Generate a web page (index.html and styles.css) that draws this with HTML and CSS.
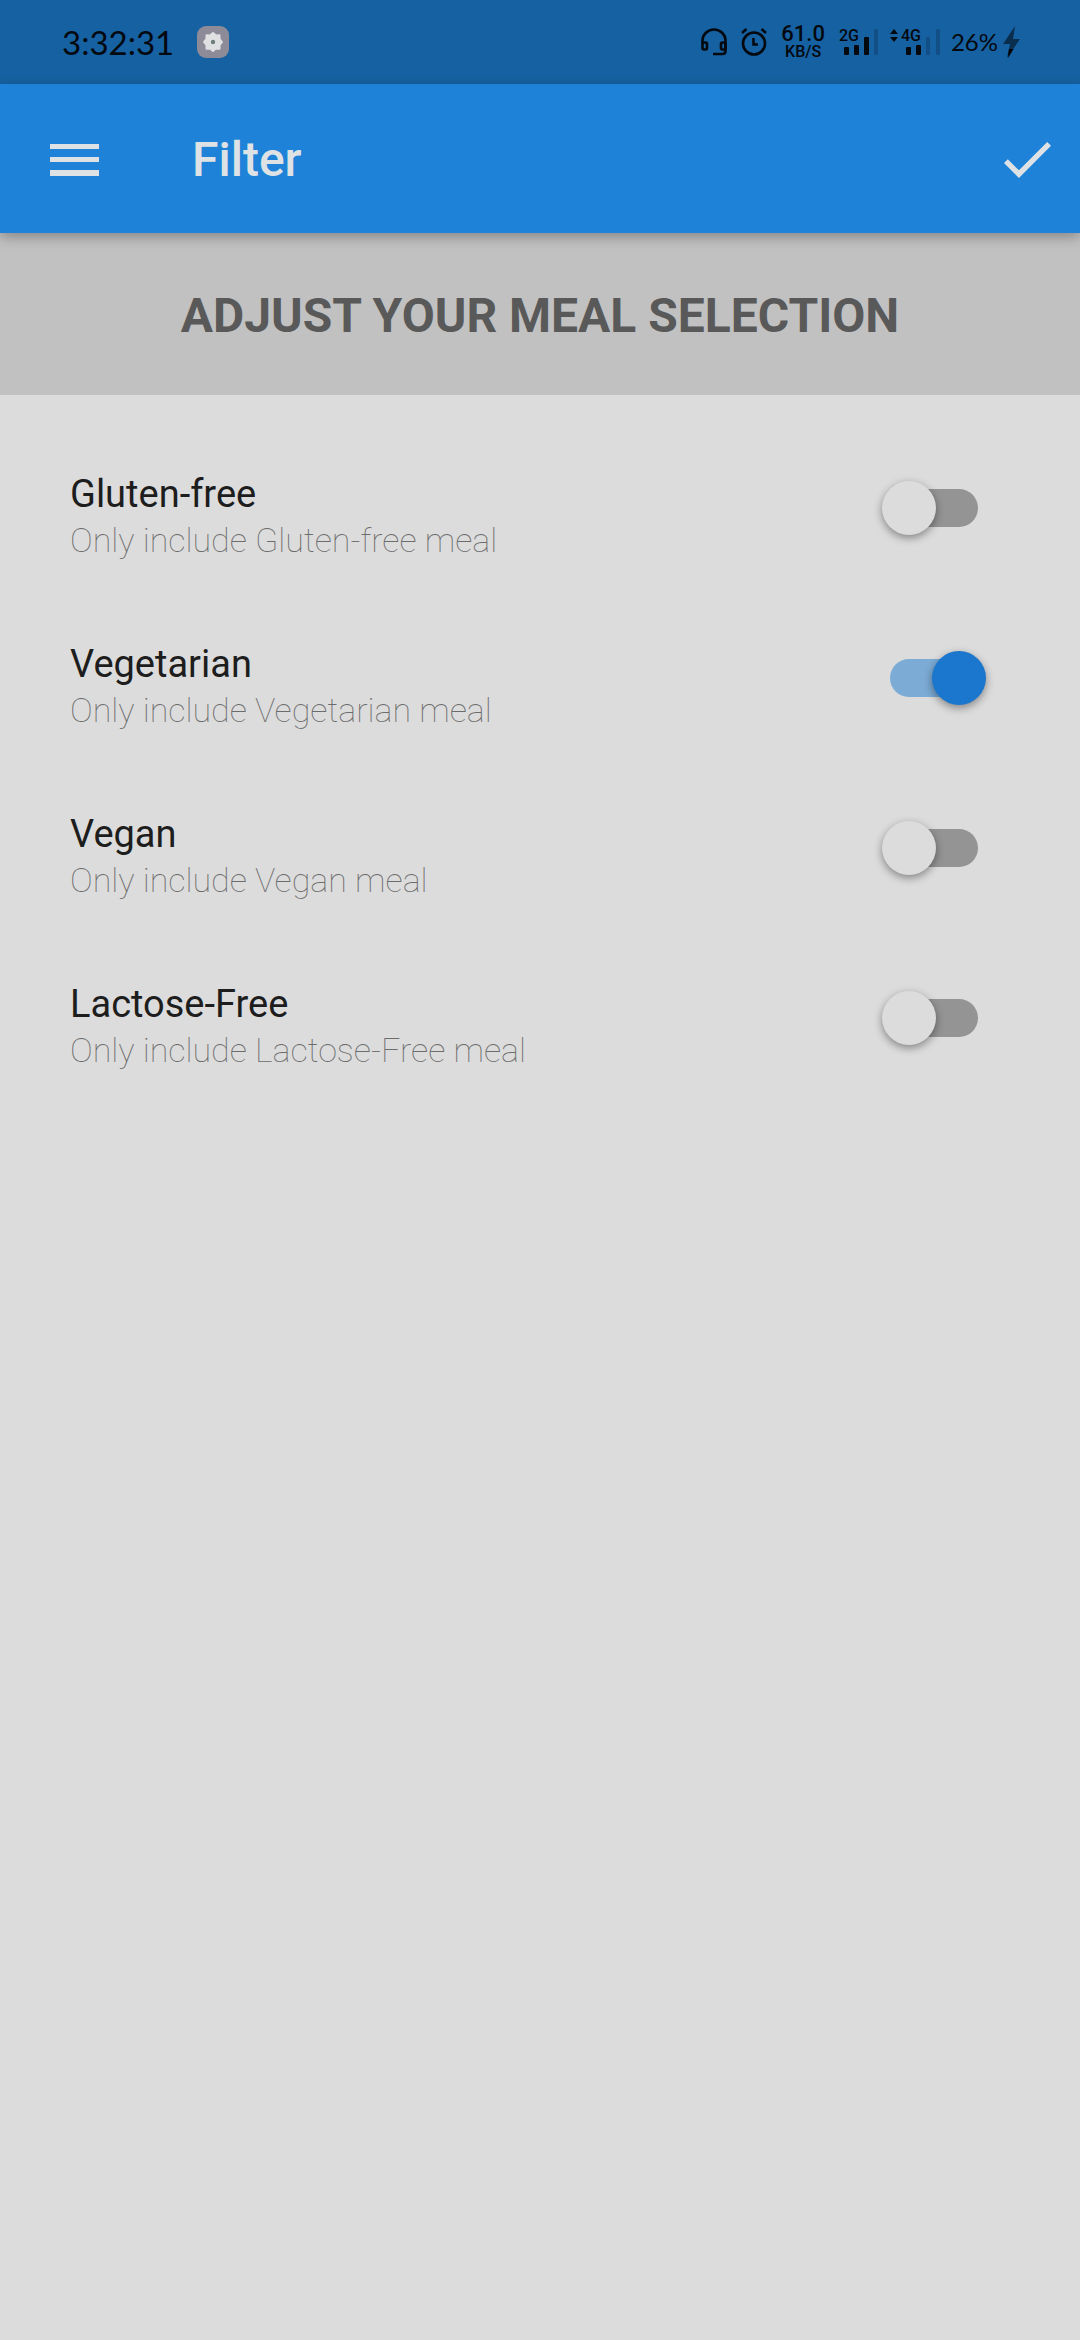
FILE: index.html
```html
<!DOCTYPE html>
<html lang="en">
<head>
  <meta charset="utf-8">
  <meta name="viewport" content="width=device-width, initial-scale=1">
  <title>Filter</title>
  <link rel="stylesheet" href="styles.css">
</head>
<body>
  <div class="status">
    <span class="status-time">3:32:31</span>
    <svg class="status-app" width="32" height="32" viewBox="0 0 32 32" aria-hidden="true">
      <rect width="32" height="32" rx="9" fill="#8d8b98"/>
      <path d="M16 7l2.800 2.600 3.700-.3.100 3.700L25 16l-2.400 3-.1 3.700-3.700-.3L16 25l-2.800-2.600-3.700.3-.1-3.700L7 16l2.400-3 .1-3.700 3.700.3z" fill="#dfe0e2" stroke="#dfe0e2" stroke-width="2" stroke-linejoin="round"/>
      <circle cx="16" cy="16" r="2.200" fill="#6f7f78"/>
    </svg>
    <div class="status-icons">
      <svg width="26" height="28" viewBox="0 0 26 28" fill="none" stroke="#04080f" stroke-width="2.600" aria-hidden="true">
        <path d="M1.500 15v-2.500a11.500 11 0 0 1 23 0V23q0 3-3 3H12"/>
        <rect x="1.500" y="14.500" width="4.500" height="7" rx="1.500"/>
        <rect x="20" y="14.500" width="4.500" height="7" rx="1.500"/>
      </svg>
      <svg width="26" height="28" viewBox="0 0 26 28" fill="none" stroke="#04080f" stroke-width="2.600" aria-hidden="true">
        <circle cx="13" cy="15.500" r="11"/>
        <path d="M12.500 10v6.500H17M1 5l4.500-4M25 5l-4.500-4"/>
      </svg>
      <div class="net"><span class="net-rate">61.0</span><span class="net-unit">KB/S</span></div>
      <div class="radios">
        <svg class="signal" width="40" height="34" viewBox="0 -3 40 34" aria-label="2G signal">
          <text x="0" y="13">2G</text>
          <rect x="5" y="19" width="5" height="8" rx="1"/>
          <rect x="15" y="17" width="5" height="10" rx="1"/>
          <rect x="25" y="9" width="5" height="18" rx="1"/>
          <rect class="faint" x="35" y="1" width="4" height="26" rx="1"/>
        </svg>
        <svg class="signal" width="50" height="34" viewBox="0 -3 50 34" aria-label="4G signal">
          <path d="M0 6l4-5 4 5zM0 9h8l-4 5z"/>
          <text x="11" y="13">4G</text>
          <rect x="16" y="19" width="5" height="8" rx="1"/>
          <rect x="26" y="17" width="5" height="10" rx="1"/>
          <rect class="faint" x="36" y="9" width="4" height="18" rx="1"/>
          <rect class="faint" x="46" y="1" width="4" height="26" rx="1"/>
        </svg>
        <div class="battery">
          <span>26%</span>
          <svg width="17" height="32" viewBox="0 0 17 32" aria-hidden="true">
            <path d="M12 0L0 18h7L4 32 17 13h-7z" fill="#0a2e4d"/>
            <path d="M6 23h4.500L5 32z" fill="#000"/>
          </svg>
        </div>
      </div>
    </div>
  </div>

  <header class="appbar">
    <button class="icon-button" type="button" aria-label="Open menu">
      <svg width="49" height="32" viewBox="0 0 49 32" fill="#dfe2e5"><path d="M0 0h49v5H0zM0 13h49v5H0zM0 26h49v6H0z"/></svg>
    </button>
    <h1 class="appbar-title">Filter</h1>
    <button class="icon-button" type="button" aria-label="Save filters">
      <svg width="47" height="36" viewBox="3.410 5.590 17.590 13.410" fill="#dfe2e5"><path d="M9 16.170 4.830 12l-1.420 1.410L9 19 21 7l-1.410-1.410z"/></svg>
    </button>
  </header>

  <main>
    <h2 class="banner">ADJUST YOUR MEAL SELECTION</h2>
    <div class="filters">
      <label class="filter">
        <span class="filter-text"><span class="filter-name">Gluten-free</span><span class="filter-note">Only include Gluten-free meal</span></span>
        <input class="switch" type="checkbox" role="switch">
      </label>
      <label class="filter">
        <span class="filter-text"><span class="filter-name">Vegetarian</span><span class="filter-note">Only include Vegetarian meal</span></span>
        <input class="switch" type="checkbox" role="switch" checked>
      </label>
      <label class="filter">
        <span class="filter-text"><span class="filter-name">Vegan</span><span class="filter-note">Only include Vegan meal</span></span>
        <input class="switch" type="checkbox" role="switch">
      </label>
      <label class="filter">
        <span class="filter-text"><span class="filter-name">Lactose-Free</span><span class="filter-note">Only include Lactose-Free meal</span></span>
        <input class="switch" type="checkbox" role="switch">
      </label>
    </div>
  </main>
</body>
</html>
```
FILE: styles.css
```css
* {
  box-sizing: border-box;
}

body {
  margin: 0;
  min-height: 100vh;
  background: #dcdcdc;
  color: #1d1d1d;
  font-family: Roboto, sans-serif;
}

svg {
  display: block;
  flex: none;
}

/* System status bar */
.status {
  display: flex;
  align-items: center;
  height: 84px;
  padding: 0 60px 0 62px;
  background: #1661a1;
  color: #04080f;
}

.status-time {
  font: 33px/40px Lato, sans-serif;
}

.status-app {
  margin-left: 23px;
}

.status-icons {
  display: flex;
  align-items: center;
  gap: 14px;
  margin-left: auto;
}

.net {
  display: flex;
  flex-direction: column;
  align-items: center;
  font-weight: 500;
}

.net-rate {
  font-size: 22px;
  line-height: 20px;
}

.net-unit {
  font-size: 16px;
  line-height: 16px;
}

.radios {
  display: flex;
  align-items: center;
  gap: 11px;
}

.signal {
  fill: #04080f;
}

.signal text {
  font-size: 16px;
  font-weight: 500;
}

.faint {
  fill: #124f86;
}

.battery {
  display: flex;
  align-items: center;
  gap: 5px;
  font: 24px/32px Lato, sans-serif;
}

/* App bar */
.appbar {
  position: relative;
  display: flex;
  align-items: center;
  height: 149px;
  padding: 2px 29px 0 50px;
  background: #1e83d8;
  box-shadow: 0 4px 12px rgba(0, 0, 0, 0.3);
}

.icon-button {
  padding: 0;
  border: 0;
  background: none;
}

.appbar-title {
  flex: 1;
  margin: 0 0 0 93px;
  color: #dfe2e5;
  font-size: 48px;
  font-weight: 500;
  line-height: 56px;
}

.banner {
  margin: 0;
  padding: 55px 20px 51px;
  background: #c1c1c1;
  color: #595959;
  font-size: 48px;
  font-weight: 700;
  line-height: 56px;
  text-align: center;
}

/* Filter list */
.filters {
  display: flex;
  flex-direction: column;
  gap: 78px;
  padding: 75px 94px 75px 70px;
}

.filter {
  display: flex;
  align-items: flex-start;
  justify-content: space-between;
}

.filter-text {
  display: flex;
  flex-direction: column;
}

.filter-name {
  font-size: 38px;
  line-height: 48px;
}

.filter-note {
  color: #6c6c6c;
  font-size: 34px;
  font-weight: 100;
  line-height: 44px;
}

.switch {
  appearance: none;
  display: grid;
  flex: none;
  align-items: center;
  width: 104px;
  height: 76px;
  margin: 0;
}

.switch::before,
.switch::after {
  content: "";
  grid-area: 1 / 1;
}

.switch::before {
  justify-self: center;
  width: 88px;
  height: 38px;
  border-radius: 19px;
  background: #949494;
}

.switch::after {
  width: 54px;
  height: 54px;
  border-radius: 50%;
  background: #dcdcdc;
  box-shadow: 0 3px 8px rgba(0, 0, 0, 0.4);
}

.switch:checked::before {
  background: #7cabd5;
}

.switch:checked::after {
  justify-self: end;
  background: #1b76cd;
}
```
